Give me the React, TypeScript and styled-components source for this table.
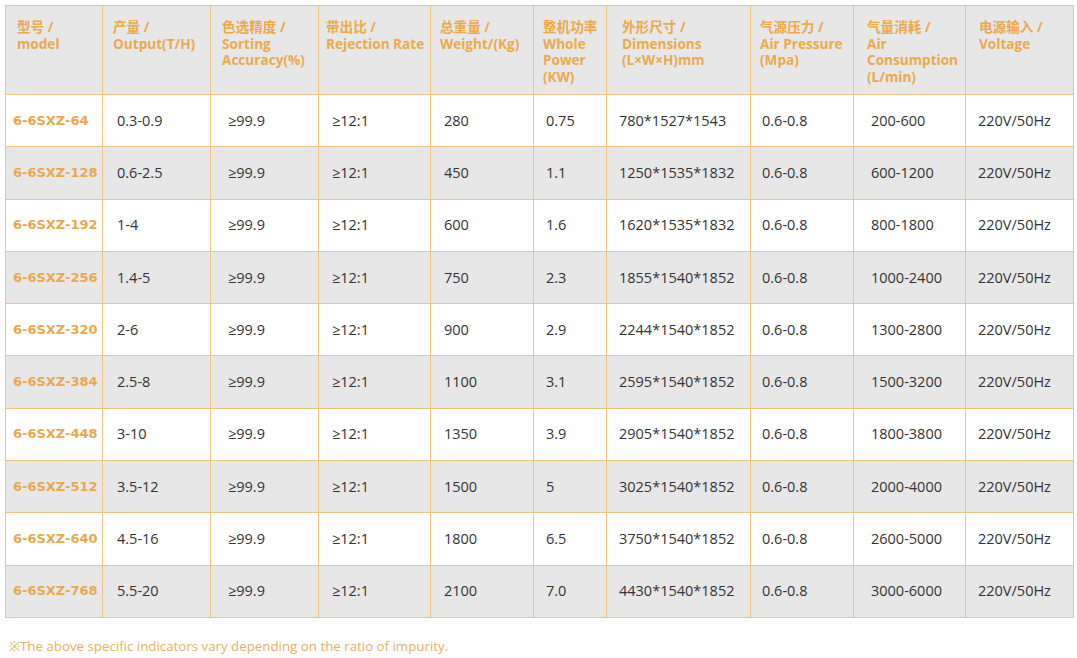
import React from "react";
import styled, { createGlobalStyle } from "styled-components";

const Global = createGlobalStyle`
  html, body { margin: 0; padding: 0; background: #ffffff; }
  body { font-family: "Open Sans", "Noto Sans CJK SC", sans-serif; }
`;

const Page = styled.div`
  padding: 5px 4px 0 5px;
  width: 1068px;
`;

const Table = styled.table`
  border-collapse: collapse;
  table-layout: fixed;
  width: 1068px;
`;

const HeadRow = styled.tr`
  height: 89px;
  background: #e8e7e8;
`;

const BodyRow = styled.tr<{ $shaded: boolean }>`
  height: 52.3px;
  background: ${(p) => (p.$shaded ? "#e8e7e8" : "#ffffff")};
`;

const HeadCell = styled.th<{ $pad: number }>`
  border: 1px solid #efc383;
  vertical-align: top;
  text-align: left;
  padding: 13px 2px 0 ${(p) => p.$pad}px;
  font-family: "Open Sans", "Noto Sans CJK SC", sans-serif;
  font-weight: 700;
  font-size: 13.6px;
  line-height: 16.5px;
  color: #eaa94c;
  white-space: nowrap;
`;

const Cell = styled.td<{ $pad: number }>`
  border: 1px solid #efc383;
  vertical-align: middle;
  text-align: left;
  padding: 0 2px 1px ${(p) => p.$pad}px;
  font-family: "Open Sans", sans-serif;
  font-size: 14.5px;
  color: #333333;
  white-space: nowrap;
`;

const ModelCell = styled(Cell)`
  font-family: "DejaVu Sans", "Verdana", sans-serif;
  font-weight: 700;
  font-size: 13px;
  color: #e9a84e;
`;

const Note = styled.p`
  margin: 19px 0 0 4px;
  font-family: "Open Sans", sans-serif;
  font-size: 13.3px;
  color: #e8b066;
`;

const widths = [97, 108, 108, 112, 103, 73, 144, 103, 112, 108];
const headPads = [11, 10, 11, 7, 9, 9, 15, 9, 13, 13];
const bodyPads = [7, 14, 17, 13, 13, 12, 12, 11, 17, 12];

const headers: string[][] = [
  ["型号 /", "model"],
  ["产量 /", "Output(T/H)"],
  ["色选精度 /", "Sorting", "Accuracy(%)"],
  ["带出比 /", "Rejection Rate"],
  ["总重量 /", "Weight/(Kg)"],
  ["整机功率", "Whole", "Power", "(KW)"],
  ["外形尺寸 /", "Dimensions", "(L×W×H)mm"],
  ["气源压力 /", "Air Pressure", "(Mpa)"],
  ["气量消耗 /", "Air", "Consumption", "(L/min)"],
  ["电源输入 /", "Voltage"],
];

const rows: string[][] = [
  ["6-6SXZ-64", "0.3-0.9", "≥99.9", "≥12:1", "280", "0.75", "780*1527*1543", "0.6-0.8", "200-600", "220V/50Hz"],
  ["6-6SXZ-128", "0.6-2.5", "≥99.9", "≥12:1", "450", "1.1", "1250*1535*1832", "0.6-0.8", "600-1200", "220V/50Hz"],
  ["6-6SXZ-192", "1-4", "≥99.9", "≥12:1", "600", "1.6", "1620*1535*1832", "0.6-0.8", "800-1800", "220V/50Hz"],
  ["6-6SXZ-256", "1.4-5", "≥99.9", "≥12:1", "750", "2.3", "1855*1540*1852", "0.6-0.8", "1000-2400", "220V/50Hz"],
  ["6-6SXZ-320", "2-6", "≥99.9", "≥12:1", "900", "2.9", "2244*1540*1852", "0.6-0.8", "1300-2800", "220V/50Hz"],
  ["6-6SXZ-384", "2.5-8", "≥99.9", "≥12:1", "1100", "3.1", "2595*1540*1852", "0.6-0.8", "1500-3200", "220V/50Hz"],
  ["6-6SXZ-448", "3-10", "≥99.9", "≥12:1", "1350", "3.9", "2905*1540*1852", "0.6-0.8", "1800-3800", "220V/50Hz"],
  ["6-6SXZ-512", "3.5-12", "≥99.9", "≥12:1", "1500", "5", "3025*1540*1852", "0.6-0.8", "2000-4000", "220V/50Hz"],
  ["6-6SXZ-640", "4.5-16", "≥99.9", "≥12:1", "1800", "6.5", "3750*1540*1852", "0.6-0.8", "2600-5000", "220V/50Hz"],
  ["6-6SXZ-768", "5.5-20", "≥99.9", "≥12:1", "2100", "7.0", "4430*1540*1852", "0.6-0.8", "3000-6000", "220V/50Hz"],
];

export default function App() {
  return (
    <Page>
      <Global />
      <Table>
        <colgroup>
          {widths.map((w, i) => (
            <col key={i} style={{ width: w }} />
          ))}
        </colgroup>
        <thead>
          <HeadRow>
            {headers.map((lines, i) => (
              <HeadCell key={i} $pad={headPads[i]}>
                {lines.map((l, j) => (
                  <React.Fragment key={j}>
                    {j > 0 && <br />}
                    {l}
                  </React.Fragment>
                ))}
              </HeadCell>
            ))}
          </HeadRow>
        </thead>
        <tbody>
          {rows.map((r, i) => (
            <BodyRow key={i} $shaded={i % 2 === 1}>
              {r.map((v, j) =>
                j === 0 ? (
                  <ModelCell key={j} $pad={bodyPads[j]}>
                    {v}
                  </ModelCell>
                ) : (
                  <Cell key={j} $pad={bodyPads[j]}>
                    {v}
                  </Cell>
                )
              )}
            </BodyRow>
          ))}
        </tbody>
      </Table>
      <Note>※The above specific indicators vary depending on the ratio of impurity.</Note>
    </Page>
  );
}
